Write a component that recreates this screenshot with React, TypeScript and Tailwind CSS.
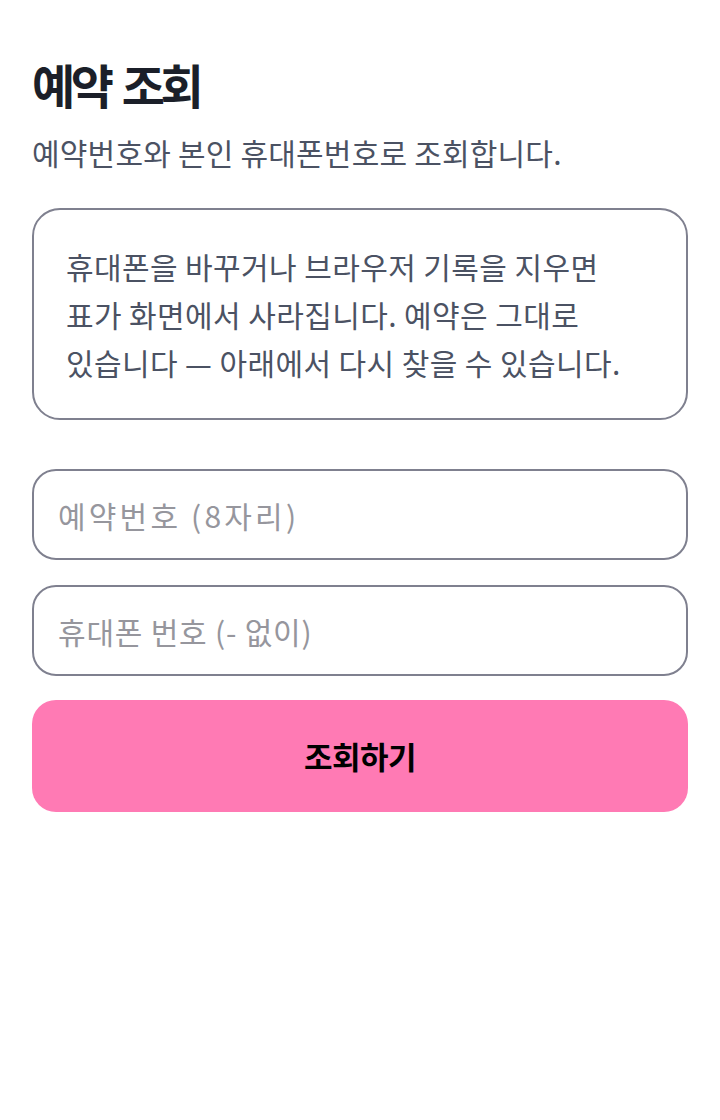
import React from 'react';

const FONT = { fontFamily: '"Noto Sans CJK KR", "Noto Sans", sans-serif' };

const App: React.FC = () => {
  return (
    <div className="min-h-[1120px] w-[720px] bg-white px-8 pt-[54px]" style={FONT}>
      <h1 className="text-[47px] font-bold leading-[60px] tracking-[-4.5px] text-[#1b1f29] [word-spacing:6px]">
        예약 조회
      </h1>
      <p className="mt-[18px] text-[30px] leading-[40px] tracking-[0.2px] text-[#4b5263]">
        예약번호와 본인 휴대폰번호로 조회합니다.
      </p>

      <div className="mt-[36px] rounded-[28px] border-2 border-[#7f808f] px-[32px] py-[32px]">
        <p className="text-[30px] leading-[48px] tracking-[0.4px] text-[#4b5263]">
          휴대폰을 바꾸거나 브라우저 기록을 지우면
          <br />
          표가 화면에서 사라집니다. 예약은 그대로
          <br />
          있습니다 — 아래에서 다시 찾을 수 있습니다.
        </p>
      </div>

      <div className="mt-[49px] flex flex-col">
        <input
          placeholder="예약번호 (8자리)"
          className="h-[91px] w-full rounded-[24px] border-2 border-[#7f808f] px-[24px] text-[30px] tracking-[3.2px] text-[#1b1f29] outline-none placeholder:text-[#96969d]"
          style={FONT}
        />
        <input
          placeholder="휴대폰 번호 (- 없이)"
          className="mt-[25px] h-[91px] w-full rounded-[24px] border-2 border-[#7f808f] px-[24px] text-[30px] tracking-[0.8px] text-[#1b1f29] outline-none placeholder:text-[#96969d]"
          style={FONT}
        />
        <button
          className="mt-[24px] h-[112px] w-full rounded-[24px] bg-[#ff7ab4] text-[31px] font-bold tracking-[-0.5px] text-black"
          style={FONT}
        >
          조회하기
        </button>
      </div>
    </div>
  );
};

export default App;
